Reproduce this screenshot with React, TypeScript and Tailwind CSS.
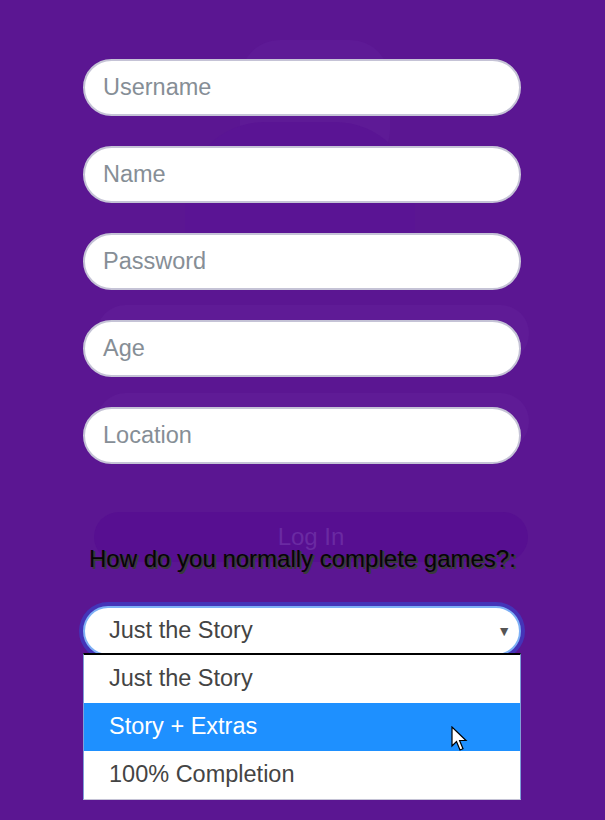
const fields = ["Username", "Name", "Password", "Age", "Location"];
const options = ["Just the Story", "Story + Extras", "100% Completion"];

const Cursor = () => (
  <svg width="20" height="28" viewBox="0 0 20 28" className="absolute left-[451px] top-[726px]">
    <path
      d="M1 1 L1 20 L5.5 15.5 L9 24 L12 22.7 L8.6 14.5 L15 14.5 Z"
      fill="#fff"
      stroke="#000"
      strokeWidth="1.2"
      strokeLinejoin="miter"
    />
  </svg>
);

export default function App() {
  return (
    <div
      className="relative w-[605px] h-[820px] overflow-hidden bg-[#5b1692]"
      style={{ fontFamily: '"Liberation Sans", Arial, sans-serif' }}
    >
      {/* faint background layer (blurred login card behind the form) */}
      <div className="absolute inset-0">
        <div className="absolute left-[240px] top-[40px] w-[150px] h-[130px] rounded-[40px] bg-[#5e1a96]" />
        <div className="absolute left-[185px] top-[122px] w-[230px] h-[120px] rounded-t-[80px] bg-[#5a1494]" />
        <div className="absolute left-[97px] top-[305px] w-[432px] h-[57px] rounded-full bg-[#5f1b96]" />
        <div className="absolute left-[97px] top-[393px] w-[432px] h-[57px] rounded-full bg-[#5f1b96]" />
        <div className="absolute left-[94px] top-[512px] w-[434px] h-[50px] rounded-full bg-[#570f91] flex items-center justify-center text-[24px] text-[#6a2aa2]">
          Log In
        </div>
      </div>

      <div className="relative pl-[83px] pt-[59px] w-[521px]">
        <div className="flex flex-col gap-[30px]">
          {fields.map((f) => (
            <div
              key={f}
              className="h-[57px] w-[438px] rounded-full bg-white border-2 border-[#c5c3d6] flex items-center pl-[18px] text-[23.5px] text-[#868e96]"
            >
              {f}
            </div>
          ))}
        </div>

        <div
          className="mt-[81px] h-[28px] leading-[28px] text-[24px] text-[#050505] pl-[6px] whitespace-nowrap"
          style={{ textShadow: "2px 1px 0 #3a3a3a, 2px 2px 0 #3a3a3a" }}
        >
          How do you normally complete games?:
        </div>

        <div className="mt-[33px] h-[50px] w-[438px] rounded-full bg-white border-2 border-[#7eb0f5] ring-4 ring-[#4434b8] flex items-center justify-between pl-[24px] pr-[8px] text-[23.5px] text-[#444]">
          <span>Just the Story</span>
          <span className="text-[14px] text-[#555]">▼</span>
        </div>

        <div className="-mt-[3px] w-[438px] border-t-2 border-t-black border-x border-x-[#7f9fd8] border-b border-b-[#c5c3d6] bg-white">
          {options.map((o, i) => (
            <div
              key={o}
              className={
                i === 1
                  ? "h-[48px] flex items-center pl-[25px] text-[23.5px] bg-[#1e90ff] text-white"
                  : "h-[48px] flex items-center pl-[25px] text-[23.5px] text-[#444]"
              }
            >
              {o}
            </div>
          ))}
        </div>
      </div>

      <Cursor />
    </div>
  );
}
